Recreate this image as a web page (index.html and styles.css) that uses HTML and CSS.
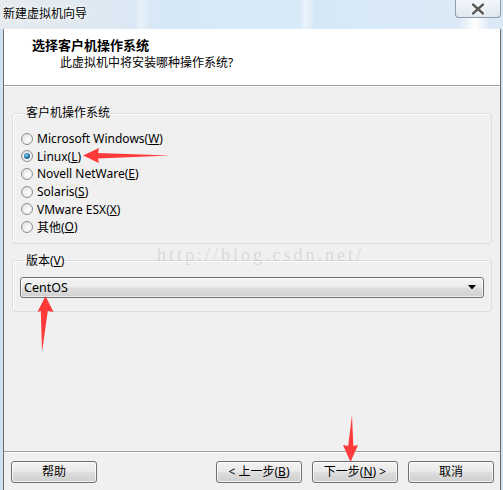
FILE: index.html
```html
<!DOCTYPE html>
<html lang="zh-CN">
<head>
<meta charset="utf-8">
<title>新建虚拟机向导</title>
<link rel="stylesheet" href="styles.css">
</head>
<body>
<div class="titlebar">
  <span class="title">新建虚拟机向导</span>
  <div class="close">
    <svg width="18" height="12" viewBox="0 0 18 12"><path d="M4 1.5 L14 10.5 M14 1.5 L4 10.5" stroke="#ffffff" stroke-width="4.5" stroke-linecap="round"/><path d="M4 1.5 L14 10.5 M14 1.5 L4 10.5" stroke="#5a5a5a" stroke-width="2.4" stroke-linecap="round"/></svg>
  </div>
</div>
<div class="frame">
  <div class="client">
    <div class="header">
      <div class="heading">选择客户机操作系统</div>
      <div class="subheading">此虚拟机中将安装哪种操作系统?</div>
    </div>
    <div class="content">
      <fieldset class="group os-group">
        <legend>客户机操作系统</legend>
        <label class="radio"><span class="dot"></span>Microsoft Windows(<u>W</u>)</label>
        <label class="radio"><span class="dot checked"></span>Linux(<u>L</u>)</label>
        <label class="radio"><span class="dot"></span>Novell NetWare(<u>E</u>)</label>
        <label class="radio"><span class="dot"></span>Solaris(<u>S</u>)</label>
        <label class="radio"><span class="dot"></span>VMware ESX(<u>X</u>)</label>
        <label class="radio"><span class="dot"></span>其他(<u>O</u>)</label>
      </fieldset>
      <fieldset class="group version-group">
        <legend>版本(<u>V</u>)</legend>
        <div class="combo">
          <span>CentOS</span>
          <svg class="caret" width="8" height="5" viewBox="0 0 8 5"><path d="M0 0 H8 L4 4.5 Z" fill="#000"/></svg>
        </div>
      </fieldset>
    </div>
    <div class="footer">
      <button class="btn">帮助</button>
      <div class="spacer"></div>
      <button class="btn">&lt; 上一步(<u>B</u>)</button>
      <button class="btn">下一步(<u>N</u>) &gt;</button>
      <button class="btn">取消</button>
    </div>
  </div>
</div>
<div class="watermark">http://blog.csdn.net/</div>
<svg class="arrows" width="503" height="490" viewBox="0 0 503 490">
  <path d="M83 155.5 L99 148 L98 153 L170 155.5 L98 158.5 L99 163 Z" fill="#ff3a3a"/>
  <path d="M45.5 296 L53.5 312 L47.8 311 L42 352 L40.8 311 L37.5 312 Z" fill="#ff3a3a"/>
  <path d="M350.5 462 L343 445 L348.2 446 L352 415 L353.3 446 L358 445 Z" fill="#ff3a3a"/>
</svg>
</body>
</html>
```
FILE: styles.css
```css
* { box-sizing: border-box; }
html, body {
  margin: 0;
  padding: 0;
}
body {
  width: 503px;
  height: 490px;
  overflow: hidden;
  position: relative;
  background: #cfe0f0;
  font-family: "Noto Sans", "Noto Sans CJK SC", sans-serif;
  font-size: 12px;
  color: #000;
}
u { text-decoration: underline; text-underline-offset: 1px; }

.titlebar {
  height: 29px;
  display: flex;
  align-items: flex-start;
  justify-content: space-between;
  background:
    linear-gradient(90deg, rgba(230,234,238,0.95) 0px, rgba(225,233,240,0.6) 120px, rgba(210,230,248,0) 170px),
    linear-gradient(90deg, #dbe9f6 0px, #d3e7f8 135px, #eef5fb 140px, #d6e8f7 150px, #d9eaf8 300px, #eaf3fb 305px, #d6e8f7 315px, #dceaf7 460px, #ffffff 475px, #dbe9f6 490px);
}
.title {
  padding: 6px 0 0 3px;
  line-height: 16px;
  font-size: 12px;
  text-shadow: 0 0 6px #fff, 0 0 6px #fff;
}
.close {
  width: 46px;
  height: 18px;
  margin-right: 2px;
  border: 1px solid #8e9cab;
  border-top: none;
  border-radius: 0 0 4px 4px;
  background: linear-gradient(#f3f7fb, #dfe8f1);
  display: flex;
  align-items: center;
  justify-content: center;
}

.frame {
  height: 461px;
  padding: 0 2px 0 3px;
  display: flex;
}
.client {
  flex: 1;
  border-left: 1px solid #6e6e6e;
  border-right: 1px solid #6e6e6e;
  background: #f0f0f0;
  display: flex;
  flex-direction: column;
}
.header {
  height: 57px;
  background: #fff;
  border-bottom: 1px solid #a0a0a0;
  padding: 7px 0 0 28px;
}
.heading {
  font-weight: bold;
  font-size: 13px;
  line-height: 17px;
  font-family: "Noto Sans CJK SC", sans-serif;
}
.subheading {
  padding-left: 28px;
  line-height: 17px;
  margin-top: 1px;
}

.content {
  flex: 1;
  padding: 18px 8px 0 8px;
  border-top: 1px solid #fff;
}
.group {
  margin: 0;
  border: 1px solid #d5dfe5;
  border-radius: 3px;
  box-shadow: inset 1px 1px 0 #fff;
  min-width: 0;
}
.group legend {
  padding: 0 1px;
  margin-left: 5px;
  line-height: 16px;
}
.os-group {
  padding: 9px 0 7px 7px;
}
.radio {
  display: flex;
  align-items: center;
  height: 17.6px;
  white-space: nowrap;
}
.dot {
  width: 12px;
  height: 12px;
  border-radius: 50%;
  border: 1px solid #8c8f91;
  background: radial-gradient(circle at 60% 60%, #ffffff 0%, #f2f2f2 40%, #d6d6d6 100%);
  margin-right: 4px;
  margin-left: 1px;
  display: flex;
  align-items: center;
  justify-content: center;
}
.dot.checked::after {
  content: "";
  width: 6px;
  height: 6px;
  border-radius: 50%;
  background: radial-gradient(circle at 40% 35%, #8fd0f0 0%, #2a7fb0 45%, #0d3f66 100%);
}
.version-group {
  margin-top: 9px;
  padding: 8px 7px 13px 7px;
}
.combo {
  height: 21px;
  border: 1px solid #707070;
  border-radius: 3px;
  background: linear-gradient(#f3f3f3 0%, #ececec 45%, #dddddd 55%, #d1d1d1 100%);
  box-shadow: inset 0 0 0 1px rgba(255,255,255,0.6);
  display: flex;
  align-items: center;
  justify-content: space-between;
  padding: 0 7px 0 3px;
  font-size: 12.5px;
}
.caret { margin-top: 1px; }

.footer {
  height: 39px;
  border-top: 1px solid #a0a0a0;
  box-shadow: inset 0 1px 0 #fff;
  padding: 9px 6px 0 7px;
  display: flex;
  align-items: flex-start;
  gap: 10px;
}
.spacer { flex: 1; }
.btn {
  width: 86px;
  height: 22px;
  border: 1px solid #707070;
  border-radius: 3px;
  background: linear-gradient(#f2f2f2 0%, #ebebeb 45%, #dddddd 55%, #cfcfcf 100%);
  box-shadow: inset 0 0 0 1px rgba(255,255,255,0.7);
  font-family: "Noto Sans", "Noto Sans CJK SC", sans-serif;
  font-size: 12px;
  color: #000;
  padding: 0;
  line-height: 18px;
}

.watermark {
  position: absolute;
  left: 157px;
  top: 243px;
  font-family: "Liberation Serif", serif;
  font-size: 18px;
  letter-spacing: 3px;
  color: rgba(160,160,160,0.3);
  line-height: 24px;
}
.arrows {
  position: absolute;
  left: 0;
  top: 0;
  pointer-events: none;
}
```
